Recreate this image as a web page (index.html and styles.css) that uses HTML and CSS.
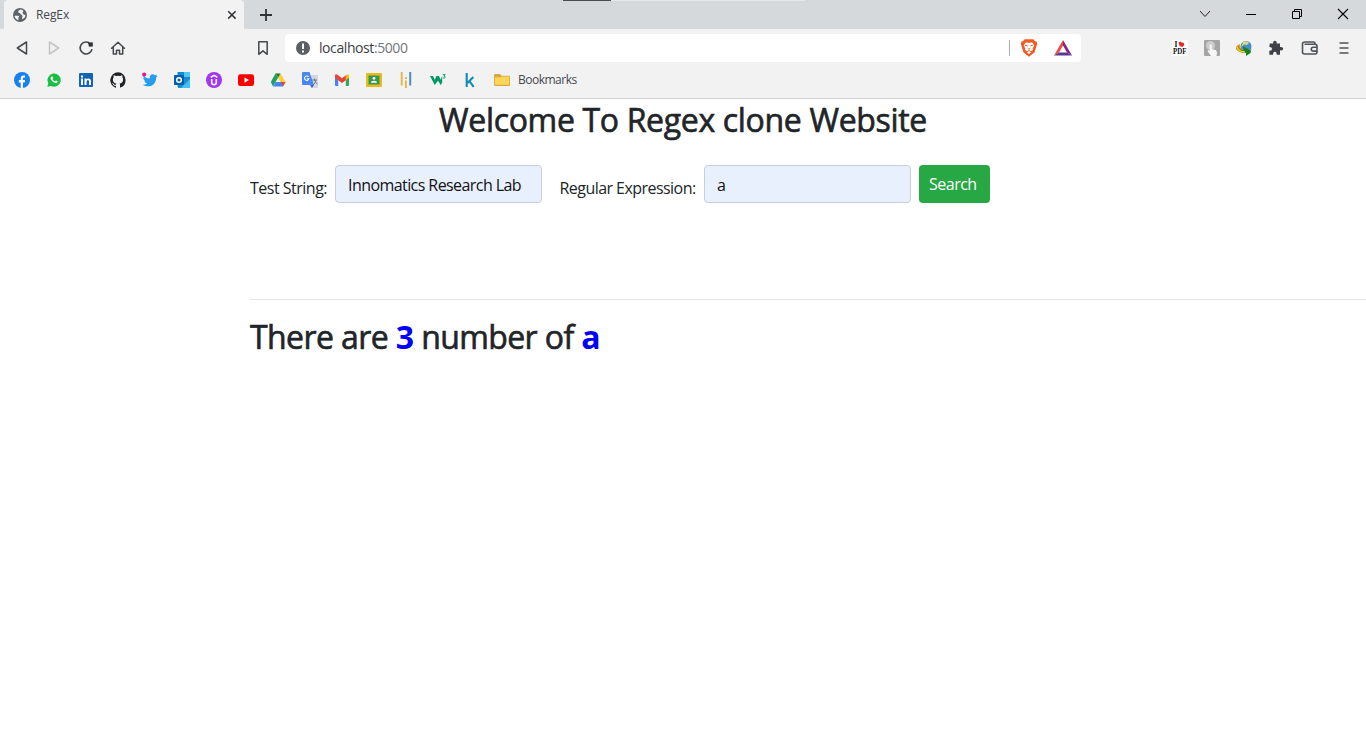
FILE: index.html
```html
<!DOCTYPE html>
<html lang="en">
<head>
<meta charset="utf-8">
<title>RegEx</title>
<link rel="stylesheet" href="styles.css">
</head>
<body>
<header class="browser">
  <div class="tabstrip">
    <div class="tab">
      <svg class="i16" viewBox="0 0 16 16"><circle cx="8" cy="8" r="7" fill="#5f6368"/><path d="M2.500 8.700h3.600c1.300.1 1.100 1.300.3 1.800v2.700C4.200 12.500 2.700 10.800 2.500 8.700zM8.700 2.600c-1.500.5-2.900 1.400-2.500 2.700.4 1 1.900.5 2.200 1.500.3 1.200 1.600.9 2 1.900.2 1-.5 2-.2 3.600 1.900-.7 3.200-2.300 3.300-4.300l-2-.6-1-1.600 1-1.700C10.900 3.300 9.800 2.700 8.700 2.600z" fill="#f1f2f3"/></svg>
      <span class="tab-title">RegEx</span>
      <svg class="i16" viewBox="0 0 16 16"><path d="M4.200 4.200l7.400 7.400M11.600 4.200l-7.400 7.400" stroke="#303338" stroke-width="1.5"/></svg>
    </div>
    <svg class="i16 newtab" viewBox="0 0 16 16"><path d="M8 2v12M2 8h12" stroke="#303338" stroke-width="1.8"/></svg>
    <div class="progress"><i></i></div>
    <div class="window-controls">
      <svg class="i16" viewBox="0 0 16 16"><path d="M3 5l5 5.5L13 5" fill="none" stroke="#222" stroke-width="1"/></svg>
      <svg class="i16" viewBox="0 0 16 16"><path d="M3 8.5h10" stroke="#000"/></svg>
      <svg class="i16" viewBox="0 0 16 16"><path d="M3.500 5.500h7v7h-7zM5.500 5.500v-2h7v7h-2" fill="none" stroke="#000"/></svg>
      <svg class="i16" viewBox="0 0 16 16"><path d="M3 3l10 10M13 3L3 13" stroke="#000" stroke-width="1.1"/></svg>
    </div>
  </div>
  <div class="toolbar">
    <div class="nav">
      <svg class="i16" viewBox="0 0 16 16" fill="none" stroke="#45484d" stroke-width="1.5" stroke-linejoin="round"><path d="M12.500 2v12L3.300 8z"/></svg>
      <svg class="i16" viewBox="0 0 16 16" fill="none" stroke="#c4c4c4" stroke-width="1.5" stroke-linejoin="round"><path d="M3.500 2v12L12.700 8z"/></svg>
      <svg class="i16" viewBox="0 0 16 16"><path d="M12.600 4A6 6 0 1 0 14 9.200" fill="none" stroke="#45484d" stroke-width="1.6"/><path d="M10 2.800l4.800-.6v4.300l-3.800.3z" fill="#303338"/></svg>
      <svg class="i16" viewBox="0 0 16 16" fill="none" stroke="#45484d" stroke-width="1.500" stroke-linejoin="round" stroke-linecap="round"><path d="M1.600 8.200L8 2.200l6.400 6M3.300 7v7h3.200v-3.700h3V14h3.200V7"/></svg>
    </div>
    <svg class="i16 save" viewBox="0 0 16 16"><path d="M3.800 1.800h8.400v12.500L8 10.800l-4.200 3.500z" fill="none" stroke="#45484d" stroke-width="1.500" stroke-linejoin="round"/></svg>
    <div class="address">
      <svg class="i16" viewBox="0 0 16 16"><circle cx="8" cy="8" r="7" fill="#5b5e63"/><path d="M8 3.500v5.500M8 10.500v2" stroke="#fff" stroke-width="2"/></svg>
      <span class="url"><b>localhost</b>:5000</span>
      <span class="divider"></span>
      <svg class="lion" viewBox="0 0 18 18"><path d="M4.700.3h8.600L15 2.200l1.600.3.600 2.500-.7 2-1.900 6.200L9 17.800l-5.600-4.600L1.500 7 .8 5l.6-2.500L3 2.200z" fill="#f15a22"/><path d="M6 3.300L9 4l3-.7 2.200 2.900-1.500 3.300.3 1.500-2.100 1.300L9 11l-1.900 1.300L5 11l.3-1.500-1.500-3.300z" fill="#fff"/><path d="M5 6.200l2.600.7M13 6.200l-2.600.7M7.900 9.400L9 10.300l1.100-.9" fill="none" stroke="#f15a22"/><path d="M6.900 13.300L9 12.100l2.100 1.200L9 15z" fill="#fff"/></svg>
      <svg class="bat" viewBox="0 0 18 18"><path d="M9 1L0 16.500l5-3L9 6.600z" fill="#ef4b3c"/><path d="M9 1l9 15.500-5-3L9 6.600z" fill="#8d2482"/><path d="M0 16.500h18l-5-3H5z" fill="#5a3a91"/></svg>
    </div>
    <div class="extensions">
      <svg class="i16" viewBox="0 0 16 16"><path d="M0 0h16v16H0z" fill="#fff"/><text x="2.500" y="7" class="pdf">I</text><text x="1" y="14" class="pdf" textLength="13.500" lengthAdjust="spacingAndGlyphs">PDF</text><path d="M6.500 2.500l2-1 1.100 1 2 .2.800 2-1.900 2.300-3-1z" fill="#e42828"/></svg>
      <svg class="i16" viewBox="0 0 16 16"><rect width="16" height="16" rx="1" fill="#a5a5a5"/><circle cx="6.500" cy="5.500" r="4.500" fill="#ccc"/><path d="M5.700 5q1-1.500 2 0v4l4 1L13 12l-.5 4H7l-3.500-5 .8-1 1.400 1z" fill="#f7f7f7"/></svg>
      <svg class="i16" viewBox="0 0 16 16"><circle cx="10" cy="6.500" r="5.500" fill="#458fc6"/><path d="M7 2q4-2 6 1l-2 2-3-.5-3 3z" fill="#d5d982"/><path d="M4 4Q-1 6 0 9q3 4 8 4l2-2-4-2Q3 8 4 4z" fill="#df8a19"/><path d="M2 5q0 5 6 5.500L6.500 6l8 4.500 1-2-1 4.500-4.500 3v-3Q2 13 2 5z" fill="#18801c"/><path d="M1 7q2 5 8 5" fill="none" stroke="#e9dc41" stroke-width="1.300"/></svg>
      <svg class="i16" viewBox="0 0 16 16"><path d="M1.800 3.500h3.400Q4.700.7 6.900.7T8.600 3.500H12V7q3.200-.4 3.200 1.700T12 10.300v4.400H8.700q.2-2.900-1.800-2.900t-1.800 2.900H1.300v-4q2.700.1 2.700-1.800T1.300 7.100z" fill="#3f4146"/></svg>
      <svg class="i18" viewBox="0 0 18 18" fill="none" stroke="#505358" stroke-width="1.600"><path d="M14 5V4.500Q14 3 12.500 3H4Q1.500 3 1.500 5v8q0 2 2 2h10.500q2 0 2-2V7.200q0-1.900-2-1.900H3.500"/><path d="M16 8.300h-3.700q-2 0-2 1.900t2 1.900H16"/></svg>
      <svg class="i16" viewBox="0 0 16 16"><path d="M3.500 3h9M3.500 8h9M3.500 13h9" stroke="#505358" stroke-width="1.500"/></svg>
    </div>
  </div>
  <nav class="bookmarks">
    <svg class="i16" viewBox="0 0 16 16"><circle cx="8" cy="8" r="8" fill="#1580f0"/><path d="M6.700 16v-5.500H4.800V8h1.900V6.400q0-3 2.800-3l1.600.2v2h-1.200q-1 0-1 1.200V8h2.200l-.4 2.500H8.900V16z" fill="#fff"/></svg>
    <svg class="i16" viewBox="0 0 16 16"><path d="M1.300 14.800l1-3.600A6.600 6.600 0 1 1 5 13.900z" fill="#19bf43"/><path d="M5.500 4.500l1 .1.700 1.600-.7 1q1 1.700 2.600 2.200l.9-1 1.700.8q.1 1.600-1.700 2-3-.3-5.300-4-.6-1.600.8-2.700z" fill="#fff"/></svg>
    <svg class="i16" viewBox="0 0 16 16"><rect x="1" y="1" width="14" height="14" rx="1" fill="#1264b8"/><path d="M3 6.500h2V13H3zM3 3.500h2v1.900H3zM6.500 6.500h2v.8q2.200-1.700 4 .2.500.6.500 1.800V13h-2V9.500Q11 8 9.900 8T8.600 9.500V13H6.500z" fill="#fff"/></svg>
    <svg class="i16" viewBox="0 0 16 16"><path d="M8 .2a8 8 0 0 0-2.500 15.500c.4.100.5-.1.500-.4v-1.500c-2.200.5-2.700-1-2.700-1-.4-.9-.9-1.200-.9-1.200-.7-.5.1-.5.1-.5.800.1 1.200.8 1.200.8.700 1.200 1.900.9 2.300.7.100-.5.300-.9.500-1.100-1.800-.2-3.600-.9-3.600-4 0-.9.300-1.600.8-2.200-.1-.2-.4-1 .1-2.100 0 0 .7-.2 2.200.8a7.600 7.600 0 0 1 4 0c1.500-1 2.200-.8 2.200-.8.400 1.100.2 1.900.1 2.100.500.600.800 1.300.800 2.200 0 3.100-1.900 3.800-3.600 4 .300.200.500.700.500 1.500v2.200c0 .3.200.5.500.4A8 8 0 0 0 8 .2z" fill="#202226"/></svg>
    <svg class="i16" viewBox="0 0 16 16"><path d="M1.500 3.800Q4.200 6.500 7.800 6.600C7.200 2.300 11 1.300 13 3.200l2.200-.8-1.100 1.700 1.700-.4-1.700 1.800C14.200 13.500 6.500 16.500.8 12.800q2.800 0 4.400-1.300-2.300-.3-2.900-2.200h1.300Q1.300 8.400 1.300 6l1.300.4Q1 5 1.500 3.800z" fill="#269eed"/><circle cx="2.200" cy="2.500" r="2.100" fill="#ec168c"/></svg>
    <svg class="i16" viewBox="0 0 16 16"><path d="M3.500 0H16v15H3.500z" fill="#118bcf"/><path d="M10 0h6v5h-6z" fill="#4dc7f3"/><path d="M4 8l12-2v10H4z" fill="#178fd4"/><path d="M16 7v9H7z" fill="#40c2f3"/><rect y="3" width="10" height="10" rx=".7" fill="#075da7"/><circle cx="5" cy="8" r="2.300" fill="none" stroke="#fff" stroke-width="1.500"/></svg>
    <svg class="i16" viewBox="0 0 16 16"><circle cx="8" cy="8" r="8" fill="#a435f0"/><path d="M4.700 5.200L8 3.300l3.300 1.900M5.700 7v3.500q0 2.200 2.300 2.200t2.300-2.200V7" fill="none" stroke="#fff" stroke-width="1.600"/></svg>
    <svg class="i16" viewBox="0 0 16 16"><rect y="2.200" width="16" height="11.800" rx="2.300" fill="#fb0000"/><path d="M6.500 5.500L11 8.100l-4.500 2.600z" fill="#fff"/></svg>
    <svg class="i16" viewBox="0 0 16 16"><path d="M5.500 1.500L8 5.700l-5 8.800L.8 10z" fill="#1da262"/><path d="M5.500 1.500h5l5 8.500h-5z" fill="#ffcf35"/><path d="M3.100 14.500L5.700 10h9.800l-2.600 4.500z" fill="#4285f4"/><path d="M10.800 10h4.700l-2.600 4.500z" fill="#ea4335"/><path d="M5.500 1.500h5L8 5.700z" fill="#16804a"/></svg>
    <svg class="i16" viewBox="0 0 16 16"><path d="M7 3h9v13H9z" fill="#d2d7e0"/><path d="M1 0h6.500L12 13H1q-1 0-1-1V1q0-1 1-1z" fill="#4b88ed"/><path d="M6.500 4.800A2.200 2.200 0 1 0 6.900 6.700H4.900" fill="none" stroke="#fff" stroke-width="1.100"/><path d="M10 8h5M12.500 6.500V8q1 3 3 4M14 8q-.5 3-3 5" fill="none" stroke="#6e7f99"/><path d="M8 13h4L10 16z" fill="#3266c4"/></svg>
    <svg class="i16" viewBox="0 0 16 16"><path d="M1 4l3.200 2.300V14H2q-1 0-1-1z" fill="#4285f4"/><path d="M11.800 6.300L15 4v9q0 1-1 1h-2.200z" fill="#34a853"/><path d="M11.800 3.300Q15 1 15 4v1.500l-3.200 2.700z" fill="#fbbc04"/><path d="M1 4Q1 1 4.200 3.300L8 6.300l3.800-3v4.900L8 11 4.200 8.200 1 5.500z" fill="#ea4335"/></svg>
    <svg class="i16" viewBox="0 0 16 16"><rect y="1" width="16" height="14" rx="1" fill="#e9b91f"/><path d="M2.500 3.500h11v9h-11z" fill="#35994c"/><circle cx="8" cy="6.300" r="1.400" fill="#fff"/><path d="M5 10.700q0-2 3-2t3 2z" fill="#fff"/></svg>
    <svg class="i16" viewBox="0 0 16 16"><path d="M3.700 0v13.500M7.900 5v1.900M7.900 8.500V16" stroke="#eab445" stroke-width="1.900"/><path d="M12.200 0v13.500" stroke="#4294bd" stroke-width="2"/></svg>
    <svg class="i16" viewBox="0 0 16 16"><path d="M0 4h3l1.800 3.700L6.500 4H9l1.600 3.700L12.200 4v6.500l-1.500 2.400L8 8.800l-3.300 4.100z" fill="#079765"/><path d="M12.800 2.500h2.300l-1.300 1.600q1.800.1 1.300 1.500-.7 1-2.100.2" fill="none" stroke="#079765" stroke-width=".9"/></svg>
    <svg class="i16" viewBox="0 0 16 16"><path d="M4.700 1v14M11.300 5L5.500 11M7.200 8.800l4.500 6" fill="none" stroke="#118cb5" stroke-width="2.100"/></svg>
    <svg class="i16" viewBox="0 0 16 16"><path d="M0 3q0-1 1-1h5l1.500 1.700H15q1 0 1 1V13q0 1-1 1H1q-1 0-1-1z" fill="#d9a93c"/><path d="M.8 5.300h5.700L8 4.500h7.200v8.300H.8z" fill="#fcd65c"/></svg>
    <span class="folder-name">Bookmarks</span>
  </nav>
</header>
<main class="page">
  <h2 class="title">Welcome To Regex clone Website</h2>
  <section class="content">
    <form class="search-form">
      <label class="lbl-test" for="test">Test String:</label>
      <input class="field" id="test" value="Innomatics Research Lab">
      <label class="lbl-regex" for="regex">Regular Expression:</label>
      <input class="field" id="regex" value="a">
      <button class="search" type="button">Search</button>
    </form>
    <hr class="rule">
    <h2 class="result">There are <b>3</b> number of <b>a</b></h2>
  </section>
</main>
</body>
</html>
```
FILE: styles.css
```css
* { box-sizing: border-box; }
body { margin: 0; background: #fff; color: #212529; font-family: "Open Sans", "Noto Sans", sans-serif; }
svg { display: block; flex: none; }
.i16 { width: 16px; height: 16px; }
.i18 { width: 18px; height: 18px; }
.browser { height: 99px; background: #f2f2f2; border-bottom: 1px solid #d2d4d6; font-size: 12px; }
.tabstrip { display: flex; height: 29px; background: #d5d9dc; padding-left: 4px; }
.tab { display: flex; align-items: center; width: 240px; padding: 0 4px 0 8px; background: #f2f2f2; border-radius: 4px 4px 0 0; }
.tab-title { flex: 1; margin-left: 8px; color: #45484d; letter-spacing: -.1px; }
.newtab { margin: 7px 0 0 14px; }
.progress { width: 242px; height: 1px; margin-left: 289px; background: #e5e8ea; }
.progress i { display: block; width: 48px; height: 1px; background: #484b50; }
.window-controls { display: flex; margin-left: auto; padding-top: 6px; }
.window-controls svg { margin: 0 15px; }
.toolbar { display: flex; align-items: center; height: 38px; padding-left: 14px; }
.nav { display: flex; gap: 16px; }
.save { margin-left: 129px; }
.address { display: flex; align-items: center; width: 796px; height: 28px; margin-left: 14px; padding: 0 9px 0 10px; background: #fff; border-radius: 4px; }
.url { flex: 1; margin-left: 8px; padding-bottom: 1px; font-size: 14px; letter-spacing: -.42px; color: #73767a; }
.url b { font-weight: 400; color: #3d4044; }
.divider { width: 1px; height: 16px; background: #a7abb0; margin-right: 10px; }
.lion { width: 18px; height: 18px; margin-right: 16px; }
.bat { width: 18px; height: 18px; }
.extensions { display: flex; align-items: center; gap: 16px; margin-left: 91px; }
.extensions svg:last-child { margin-left: 1px; }
.extensions .i18 { margin-left: 1px; }
.pdf { font: bold 7.5px "Liberation Serif", serif; fill: #111; }
.bookmarks { display: flex; align-items: center; gap: 16px; height: 26px; padding-left: 14px; }
.folder-name { margin-left: -8px; padding-bottom: 1px; color: #45484d; letter-spacing: -.5px; }
.page { display: flow-root; }
.title, .result { margin: 0; font-size: 32px; line-height: 44px; font-weight: 400; -webkit-text-stroke: .65px #212529; white-space: nowrap; }
.title { margin-top: -1px; text-align: center; letter-spacing: -.33px; }
.content { padding-left: 250px; }
.search-form { display: flex; height: 38px; margin-top: 23px; font-size: 16px; white-space: nowrap; }
.lbl-test { width: 85px; padding-top: 11px; line-height: 24px; letter-spacing: -.5px; }
.lbl-regex { width: 144px; margin-left: 17.500px; margin-right: .5px; padding-top: 11px; line-height: 24px; letter-spacing: -.55px; }
.field { width: 207px; height: 38px; padding: 1px 12px 0; font: 16px "Open Sans", "Noto Sans", sans-serif; letter-spacing: -.57px; color: #111; background: #e8f0fe; border: 1px solid #c7cfdd; border-radius: 4px; outline: 0; }
.search { width: 71px; height: 38px; margin-left: 8px; padding: 0 10px; border: 0; border-radius: 4px; background: #28a745; color: #fff; font: 16px "Open Sans", "Noto Sans", sans-serif; letter-spacing: -.5px; text-align: left; }
.rule { height: 1px; margin: 96px 0 15px; border: 0; background: #e5e5e5; }
.result { letter-spacing: -.6px; }
.result b { font-weight: 700; color: #00f; -webkit-text-stroke: 0; }
```
